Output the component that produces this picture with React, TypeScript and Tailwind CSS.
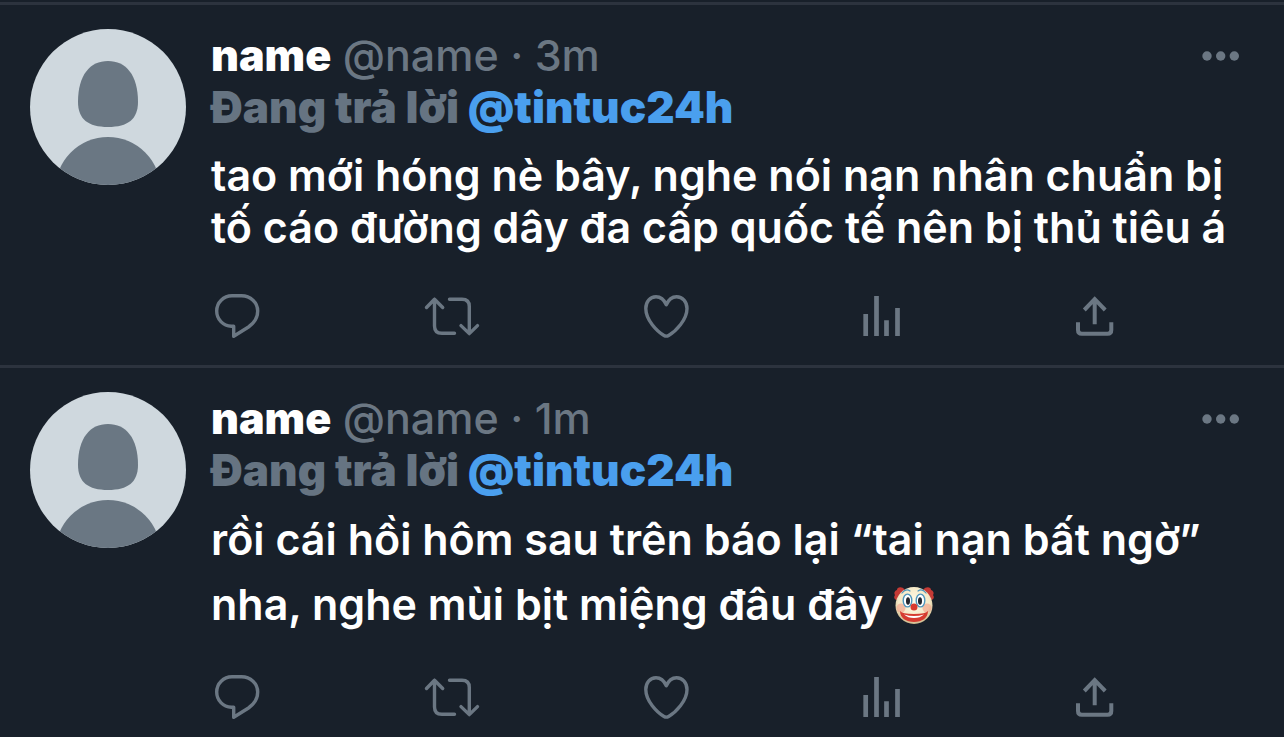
import type { ReactNode } from 'react';

type Tweet = {
  id: number;
  name: string;
  handle: string;
  time: string;
  replyTo: string;
  lines: string[];
  clown?: boolean;
};

const tweets: Tweet[] = [
  {
    id: 1,
    name: 'name',
    handle: '@name',
    time: '3m',
    replyTo: '@tintuc24h',
    lines: [
      'tao mới hóng nè bây, nghe nói nạn nhân chuẩn bị',
      'tố cáo đường dây đa cấp quốc tế nên bị thủ tiêu á',
    ],
  },
  {
    id: 2,
    name: 'name',
    handle: '@name',
    time: '1m',
    replyTo: '@tintuc24h',
    lines: ['rồi cái hồi hôm sau trên báo lại “tai nạn bất ngờ”', 'nha, nghe mùi bịt miệng đâu đây'],
    clown: true,
  },
];

function Avatar() {
  return (
    <svg viewBox="0 0 156 156" className="size-[156px] shrink-0 rounded-full bg-[#cfd8de]" aria-hidden="true">
      <path
        d="M78 32C96 32 108 46 108 73C108 90 98 98 78 98C58 98 48 90 48 73C48 46 60 32 78 32Z"
        fill="#6a7783"
      />
      <ellipse cx="78" cy="162" rx="53" ry="54" fill="#6a7783" />
    </svg>
  );
}

function Clown() {
  return (
    <svg viewBox="0 0 40 40" className="inline-block size-10 align-[-5px]" role="img" aria-label="clown">
      <defs>
        <radialGradient id="clown-face" cx="50%" cy="40%" r="60%">
          <stop offset="0" stopColor="#fffbe8" />
          <stop offset="0.7" stopColor="#f4e8c6" />
          <stop offset="1" stopColor="#cfb98c" />
        </radialGradient>
      </defs>
      <path
        d="M11 5C8 1 3 2 3 5C0 6 0 9 1 10C-1 13 1 15 3 15L5 18ZM29 5C32 1 37 2 37 5C40 6 40 9 39 10C41 13 39 15 37 15L35 18Z"
        fill="#c53a35"
      />
      <circle cx="20" cy="20.5" r="18.5" fill="url(#clown-face)" />
      <circle cx="7" cy="23" r="4.5" fill="#f3a38c" opacity="0.65" />
      <circle cx="33" cy="23" r="4.5" fill="#f3a38c" opacity="0.65" />
      <g fill="none" stroke="#4e96bd" strokeLinecap="round" strokeWidth="1.2">
        <path d="M8 8Q12 3 16 6M24 6Q28 3 32 8" />
      </g>
      <g fill="#fff" stroke="#4e96bd" strokeWidth="1.4">
        <ellipse cx="13.5" cy="15.5" rx="4.3" ry="6.4" />
        <ellipse cx="26.5" cy="15.5" rx="4.3" ry="6.4" />
      </g>
      <ellipse cx="14" cy="16" rx="2" ry="3.7" fill="#23262e" />
      <ellipse cx="26" cy="16" rx="2" ry="3.7" fill="#23262e" />
      <path d="M6 26Q8 29 20 29Q32 29 34 26C34 33 28 37 20 37C12 37 6 33 6 26Z" fill="#d63b30" />
      <path d="M10 29.5Q20 32.5 30 29.5Q26 33 20 33Q14 33 10 29.5Z" fill="#fff" />
      <circle cx="20" cy="22" r="3.5" fill="#d8392f" />
    </svg>
  );
}

function ActionButton({ label, children }: { label: string; children: ReactNode }) {
  return (
    <button type="button" aria-label={label} className="block h-12 w-[52px] cursor-pointer">
      <svg
        viewBox="0 0 52 48"
        className="h-12 w-[52px] overflow-visible"
        fill="none"
        stroke="currentColor"
        strokeWidth="3.4"
        strokeLinejoin="round"
        aria-hidden="true"
      >
        {children}
      </svg>
    </button>
  );
}

function Actions() {
  return (
    <div className="grid grid-cols-5 text-[#6b7783]">
      <ActionButton label="Reply">
        <path d="M21 3.8H30.5C39.5 3.8 46.7 10.5 46.7 19C46.7 26 42.5 31.5 37.5 35L22.7 44.3V34.3H20.5C12 33.8 5.7 27.5 5.7 19C5.7 10.5 12.5 3.8 21 3.8Z" />
      </ActionButton>
      <ActionButton label="Retweet">
        <g strokeLinecap="round">
          <path d="M0.5 15.5L8.5 7.2L16.7 15.5M8.5 7.2V34Q8.5 41.3 15.8 41.3H28.5" />
          <path d="M23.5 7.3H36Q43.3 7.3 43.3 14.5V41.6M35 33.6L43.3 41.6L51.5 33.6" />
        </g>
      </ActionButton>
      <ActionButton label="Like">
        <path d="M26.3 12.8C24 7.5 20.5 4.8 16 4.8C10 4.8 5.8 10 5.8 16.5C5.8 28 17 39.5 24 43.5Q26.3 44.8 28.6 43.5C35.6 39.5 47 28 47 16.5C47 10 42.6 4.8 36.6 4.8C32 4.8 28.6 7.5 26.3 12.8Z" />
      </ActionButton>
      <ActionButton label="View stats">
        <path d="M10.7 22V44M21.5 4V44M31.5 28.3V44M42.5 16V44" strokeWidth="4.7" />
      </ActionButton>
      <ActionButton label="Share">
        <path
          d="M15.3 18L25.7 7.2L36.2 18M25.7 7.2V32.3M9 30.3V38Q9 41.8 12.8 41.8H38.5Q42.3 41.8 42.3 38V30.3"
          strokeWidth="4"
          strokeLinejoin="miter"
        />
      </ActionButton>
    </div>
  );
}

function TweetItem({ tweet }: { tweet: Tweet }) {
  return (
    <article className="flex gap-[25px] border-t-3 border-[#2c333e] pt-6 pb-[25px] pl-[30px] last:pb-4">
      <Avatar />
      <div className="min-w-0 flex-1 text-[43px] leading-[52px]">
        <header className="flex items-start justify-between pr-11">
          <div>
            <span className="font-black text-white">{tweet.name}</span>
            <span className="font-medium text-[#6b7783]">
              {' '}
              {tweet.handle} · {tweet.time}
            </span>
          </div>
          <button type="button" aria-label="More" className="mt-3 cursor-pointer text-[#6b7783]">
            <svg viewBox="0 0 38 30" className="h-[30px] w-[38px]" fill="currentColor" aria-hidden="true">
              <circle cx="5" cy="15" r="4.7" />
              <circle cx="18.7" cy="15" r="4.7" />
              <circle cx="32.3" cy="15" r="4.7" />
            </svg>
          </button>
        </header>
        <p className="text-[44px] leading-[52px] font-black text-[#667482]">
          Đang trả lời{' '}
          <a href="#" className="text-[#4a9fee]">
            {tweet.replyTo}
          </a>
        </p>
        <p
          className={`font-semibold whitespace-nowrap text-white ${
            tweet.clown ? 'mt-[11px] mb-9 leading-[65px]' : 'mt-4 mb-[39px]'
          }`}
        >
          {tweet.lines[0]}
          <br />
          {tweet.lines[1]} {tweet.clown && <Clown />}
        </p>
        <Actions />
      </div>
    </article>
  );
}

export default function App() {
  return (
    <main className="min-h-screen overflow-hidden bg-[#18202a] pt-0.5 font-['Inter','Liberation_Sans',sans-serif]">
      {tweets.map((tweet) => (
        <TweetItem key={tweet.id} tweet={tweet} />
      ))}
    </main>
  );
}
